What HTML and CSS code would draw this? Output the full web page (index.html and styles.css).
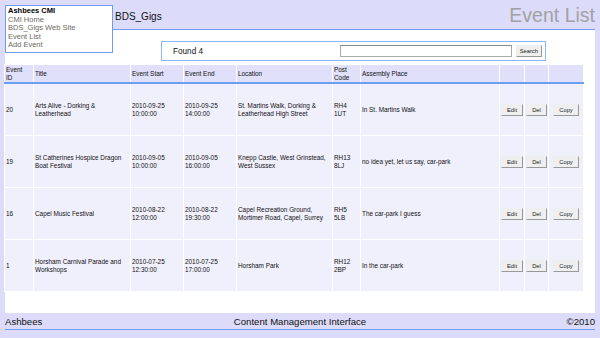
FILE: index.html
```html
<!DOCTYPE html>
<html>
<head>
<meta charset="utf-8">
<title>Event List</title>
<link rel="stylesheet" href="styles.css">
</head>
<body>
<div class="page">
  <header class="top">
    <nav class="menu">
      <div class="menu-title">Ashbees CMI</div>
      <a href="#">CMI Home</a>
      <a href="#">BDS_Gigs Web Site</a>
      <a href="#">Event List</a>
      <a href="#">Add Event</a>
    </nav>
    <span class="site">BDS_Gigs</span>
    <h1 class="title">Event List</h1>
  </header>
  <main class="content">
    <div class="searchbar">
      <span class="found">Found 4</span>
      <input class="search-input" type="text">
      <button class="btn search-btn">Search</button>
    </div>
    <table class="events">
      <colgroup>
        <col class="c-id"><col class="c-title"><col class="c-start"><col class="c-end"><col class="c-loc">
        <col class="c-pc"><col class="c-asm"><col class="c-edit"><col class="c-del"><col class="c-copy">
      </colgroup>
      <thead>
        <tr>
          <th>Event<br>ID</th>
          <th>Title</th>
          <th>Event Start</th>
          <th>Event End</th>
          <th>Location</th>
          <th>Post<br>Code</th>
          <th>Assembly Place</th>
          <th></th>
          <th></th>
          <th></th>
        </tr>
      </thead>
      <tbody>
        <tr>
          <td>20</td>
          <td>Arts Alive - Dorking &amp;<br>Leatherhead</td>
          <td>2010-09-25<br>10:00:00</td>
          <td>2010-09-25<br>14:00:00</td>
          <td>St. Martins Walk, Dorking &amp;<br>Leatherhead High Street</td>
          <td>RH4<br>1UT</td>
          <td>In St. Martins Walk</td>
          <td class="act"><button class="btn">Edit</button></td>
          <td class="act"><button class="btn">Del</button></td>
          <td class="act"><button class="btn">Copy</button></td>
        </tr>
        <tr>
          <td>19</td>
          <td>St Catherines Hospice Dragon<br>Boat Festival</td>
          <td>2010-09-05<br>10:00:00</td>
          <td>2010-09-05<br>16:00:00</td>
          <td>Knepp Castle, West Grinstead,<br>West Sussex</td>
          <td>RH13<br>8LJ</td>
          <td>no idea yet, let us say, car-park</td>
          <td class="act"><button class="btn">Edit</button></td>
          <td class="act"><button class="btn">Del</button></td>
          <td class="act"><button class="btn">Copy</button></td>
        </tr>
        <tr>
          <td>16</td>
          <td>Capel Music Festival</td>
          <td>2010-08-22<br>12:00:00</td>
          <td>2010-08-22<br>19:30:00</td>
          <td>Capel Recreation Ground,<br>Mortimer Road, Capel, Surrey</td>
          <td>RH5<br>5LB</td>
          <td>The car-park I guess</td>
          <td class="act"><button class="btn">Edit</button></td>
          <td class="act"><button class="btn">Del</button></td>
          <td class="act"><button class="btn">Copy</button></td>
        </tr>
        <tr>
          <td>1</td>
          <td>Horsham Carnival Parade and<br>Workshops</td>
          <td>2010-07-25<br>12:30:00</td>
          <td>2010-07-25<br>17:00:00</td>
          <td>Horsham Park</td>
          <td>RH12<br>2BP</td>
          <td>In the car-park</td>
          <td class="act"><button class="btn">Edit</button></td>
          <td class="act"><button class="btn">Del</button></td>
          <td class="act"><button class="btn">Copy</button></td>
        </tr>
      </tbody>
    </table>
  </main>
  <footer class="foot">
    <span class="foot-left">Ashbees</span>
    <span class="foot-mid">Content Management Interface</span>
    <span class="foot-right">&copy;2010</span>
  </footer>
</div>
</body>
</html>
```
FILE: styles.css
```css
html, body {
  margin: 0;
  padding: 0;
  background: #dcdcfa;
  font-family: "Liberation Sans", Arial, sans-serif;
  color: #111;
}
.page {
  position: relative;
  width: 590px;
  height: 338px;
  padding: 0 5px;
}
.top {
  height: 29px;
  border-bottom: 1px solid #6c9ef4;
  display: flex;
  align-items: center;
  justify-content: space-between;
  padding-left: 110px;
}
.menu {
  position: absolute;
  left: 5px;
  top: 5px;
  width: 104px;
  height: 45px;
  padding: 1px 0 0 2px;
  background: #fff;
  border: 1px solid #6c9ef4;
  font-size: 7.5px;
  line-height: 8.6px;
  z-index: 2;
  display: flex;
  flex-direction: column;
}
.menu-title {
  font-weight: bold;
  color: #000;
}
.menu a {
  color: #6e6a62;
  text-decoration: none;
}
.site {
  font-size: 10px;
  padding-top: 4px;
}
.title {
  margin: 0;
  font-weight: normal;
  font-size: 19.5px;
  color: #a2a2a2;
  padding-top: 2px;
}
.content {
  background: #fff;
  height: 283px;
  padding-top: 11px;
  box-sizing: border-box;
}
.searchbar {
  margin-left: 156px;
  width: 383px;
  height: 18px;
  border: 1px solid #8db4f5;
  display: flex;
  align-items: center;
  font-size: 8.2px;
}
.found {
  padding-left: 11px;
  flex: 1;
}
.search-input {
  width: 170px;
  height: 10px;
  padding: 0;
  margin: 0 4px 0 0;
  border: 1px solid #aaa;
  border-top-color: #888;
}
.btn {
  font-family: "Liberation Sans", Arial, sans-serif;
  font-size: 5.8px;
  background: #efefef;
  border: 1px solid #999;
  border-top-color: #eee;
  border-left-color: #eee;
  padding: 2px 5px;
  margin: 0;
  line-height: 6px;
  color: #222;
}
.search-btn {
  margin-right: 3px;
  padding: 2px 3px;
}
.events {
  margin-top: 3px;
  margin-left: -1px;
  border-collapse: collapse;
  font-size: 6.4px;
  line-height: 8px;
  table-layout: fixed;
  width: 579px;
}
.events th, .events td {
  border: 1px solid #fff;
  text-align: left;
  vertical-align: middle;
  padding: 0 1px;
}
.events th {
  background: #e0e0fa;
  font-weight: normal;
  height: 17px;
  border-bottom: 2px solid #6c9ef4;
}
.events td {
  background: #f0f0fc;
  height: 51px;
}
.events td.act {
  padding: 0;
  text-align: center;
}
.c-id { width: 29px; }
.c-title { width: 97px; }
.c-start { width: 53px; }
.c-end { width: 53px; }
.c-loc { width: 96px; }
.c-pc { width: 28px; }
.c-asm { width: 139px; }
.c-edit { width: 25px; }
.c-del { width: 24px; }
.c-copy { width: 35px; }
.foot {
  height: 15px;
  border-bottom: 1px solid #6c9ef4;
  display: grid;
  grid-template-columns: 1fr auto 1fr;
  align-items: center;
  font-size: 9.6px;
  padding-top: 1px;
}
.foot-right {
  text-align: right;
}
```
